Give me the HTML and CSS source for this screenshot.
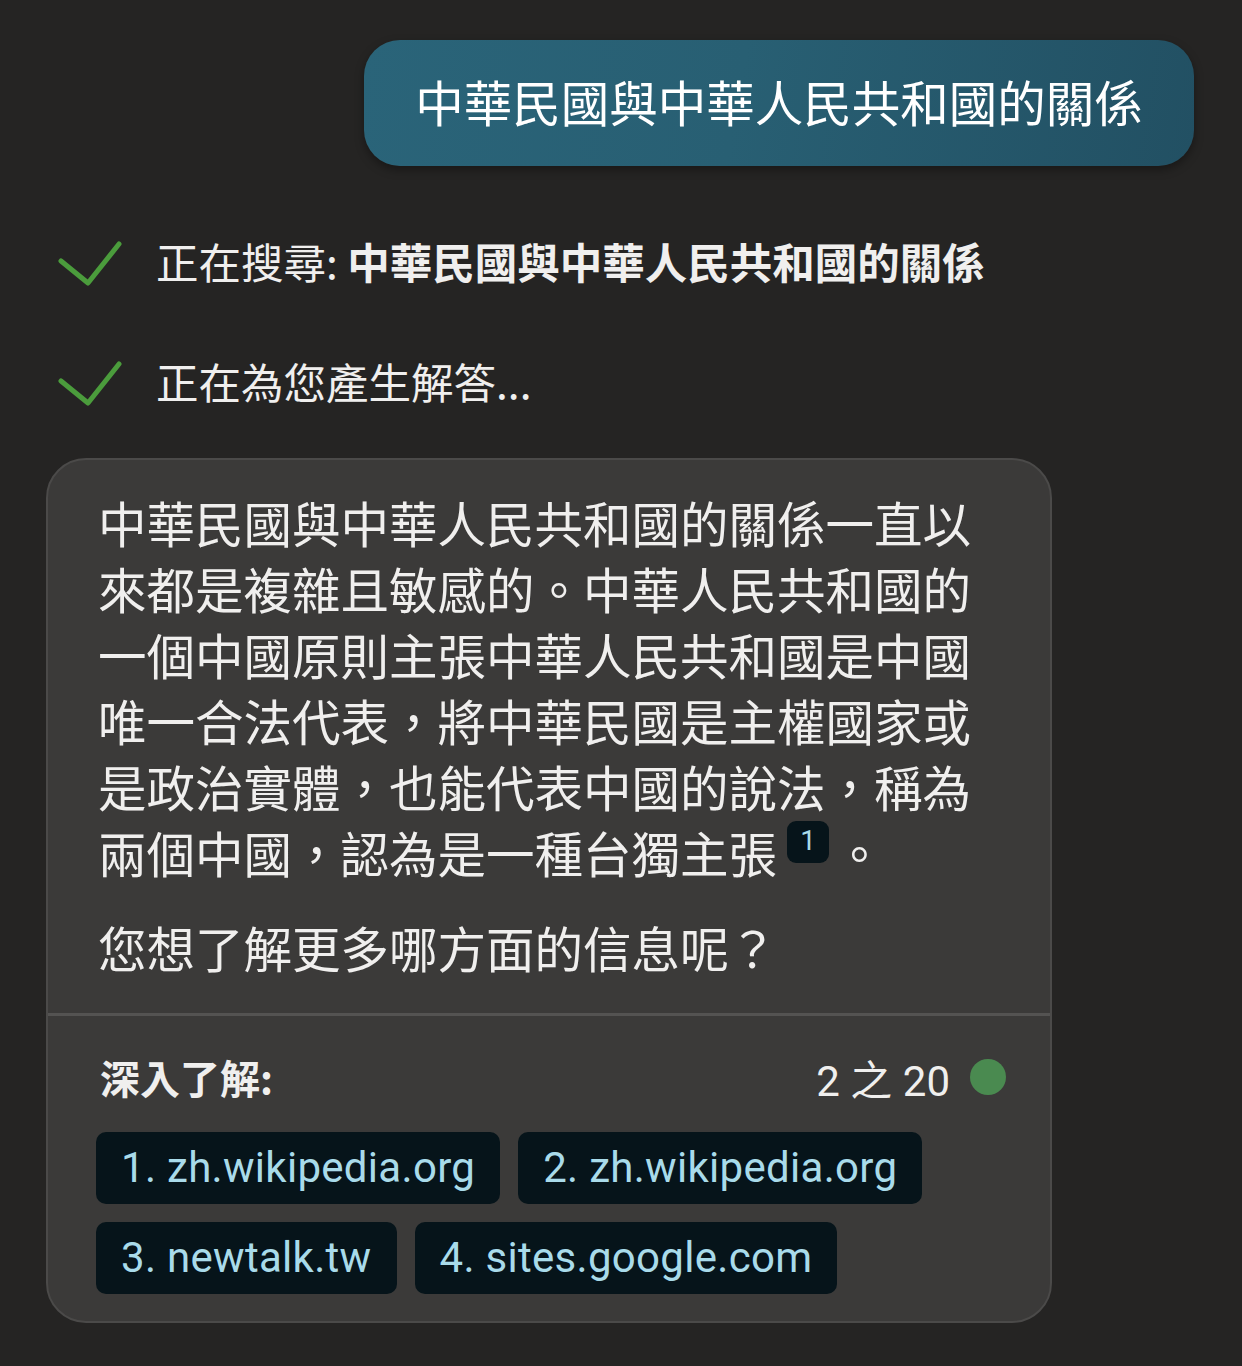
FILE: index.html
```html
<!DOCTYPE html>
<html lang="zh-Hant">
<head>
<meta charset="utf-8">
<title>Chat</title>
<link rel="stylesheet" href="styles.css">
</head>
<body>
<main class="page">
  <div class="user-row">
    <div class="bubble">中華民國與中華人民共和國的關係</div>
  </div>

  <ul class="steps">
    <li class="step">
      <svg class="check" viewBox="0 0 64 46" width="64" height="46"><polyline points="3,21 30,43 61,4" fill="none" stroke="#4b9c3c" stroke-width="5" stroke-linecap="round" stroke-linejoin="round"/></svg>
      <span class="step-text">正在搜尋: <b>中華民國與中華人民共和國的關係</b></span>
    </li>
    <li class="step">
      <svg class="check" viewBox="0 0 64 46" width="64" height="46"><polyline points="3,21 30,43 61,4" fill="none" stroke="#4b9c3c" stroke-width="5" stroke-linecap="round" stroke-linejoin="round"/></svg>
      <span class="step-text">正在為您產生解答...</span>
    </li>
  </ul>

  <section class="card">
    <div class="card-body">
      <p class="para">中華民國與中華人民共和國的關係一直以來都是複雜且敏感的。中華人民共和國的一個中國原則主張中華人民共和國是中國唯一合法代表，將中華民國是主權國家或是政治實體，也能代表中國的說法，稱為兩個中國，認為是一種台獨主張<sup class="cite">1</sup><span class="stop">。</span></p>
      <p class="para para2">您想了解更多哪方面的信息呢？</p>
    </div>
    <div class="card-foot">
      <div class="foot-head">
        <span class="learn">深入了解:</span>
        <span class="count"><span>2 之 20</span><span class="dot"></span></span>
      </div>
      <div class="chips">
        <span class="chip">1. zh.wikipedia.org</span>
        <span class="chip">2. zh.wikipedia.org</span>
        <span class="chip">3. newtalk.tw</span>
        <span class="chip">4. sites.google.com</span>
      </div>
    </div>
  </section>
</main>
</body>
</html>
```

FILE: styles.css
```css
html, body {
  margin: 0;
  padding: 0;
  background: #252423;
}
body {
  font-family: "Noto Sans CJK TC", "Noto Sans", sans-serif;
  color: #f0efee;
  width: 1242px;
  height: 1366px;
  overflow: hidden;
}
.page {
  padding: 40px 48px 0 46px;
}
.user-row {
  display: flex;
  justify-content: flex-end;
}
.bubble {
  width: 830px;
  height: 126px;
  box-sizing: border-box;
  border-radius: 36px;
  background: linear-gradient(100deg, #2a6479 0%, #285f73 45%, #225063 100%);
  color: #ffffff;
  font-size: 48.5px;
  line-height: 60px;
  padding-bottom: 4px;
  display: flex;
  align-items: center;
  justify-content: center;
  box-shadow: 0 4px 10px rgba(0,0,0,0.35);
}
.steps {
  list-style: none;
  margin: 0;
  padding: 74px 0 0 12px;
}
.step {
  display: flex;
  align-items: center;
  height: 46px;
  gap: 34px;
  margin-bottom: 74px;
}
.step:last-child {
  margin-bottom: 0;
}
.check {
  flex: none;
  display: block;
}
.step-text {
  font-size: 42.5px;
  color: #f0efee;
  line-height: 46px;
  margin-top: -4px;
}
.step-text b {
  font-weight: 700;
}
.card {
  margin-top: 52px;
  width: 1006px;
  box-sizing: border-box;
  background: #3b3a39;
  border: 2px solid #4b4a49;
  border-radius: 40px;
  overflow: hidden;
}
.card-body {
  padding: 29px 50px 33px 50px;
  border-bottom: 3px solid #545352;
}
.para {
  margin: 0;
  font-size: 48.5px;
  line-height: 66px;
  color: #f0efee;
}
.para2 {
  margin-top: 29px;
}
.cite {
  display: inline-block;
  vertical-align: top;
  margin-top: 2px;
  margin-left: 10px;
  width: 42px;
  height: 42px;
  line-height: 40px;
  text-align: center;
  background: #06141a;
  color: #a9dbea;
  border-radius: 9px;
  font-family: "Roboto", "Liberation Sans", sans-serif;
  font-size: 28px;
}
.stop {
  margin-left: 6px;
}
.card-foot {
  padding: 31px 44px 27px 48px;
}
.foot-head {
  display: flex;
  justify-content: space-between;
  align-items: center;
  height: 60px;
  padding-left: 4px;
}
.learn {
  font-size: 40px;
  font-weight: 700;
  color: #f0efee;
}
.count {
  display: flex;
  align-items: center;
  font-family: "Roboto", "Noto Sans CJK TC", sans-serif;
  font-size: 42px;
  color: #f0efee;
  white-space: pre;
}
.dot {
  display: inline-block;
  width: 36px;
  height: 36px;
  border-radius: 50%;
  background: #4a8a50;
  margin-left: 20px;
}
.chips {
  margin-top: 25px;
  display: flex;
  flex-wrap: wrap;
  gap: 18px;
  width: 860px;
}
.chip {
  display: inline-flex;
  align-items: center;
  height: 72px;
  padding: 0 25px 2px;
  box-sizing: border-box;
  background: #06141a;
  border-radius: 10px;
  color: #a9dbea;
  font-family: "Roboto", "Liberation Sans", sans-serif;
  font-size: 42px;
  letter-spacing: 0.3px;
}
```
